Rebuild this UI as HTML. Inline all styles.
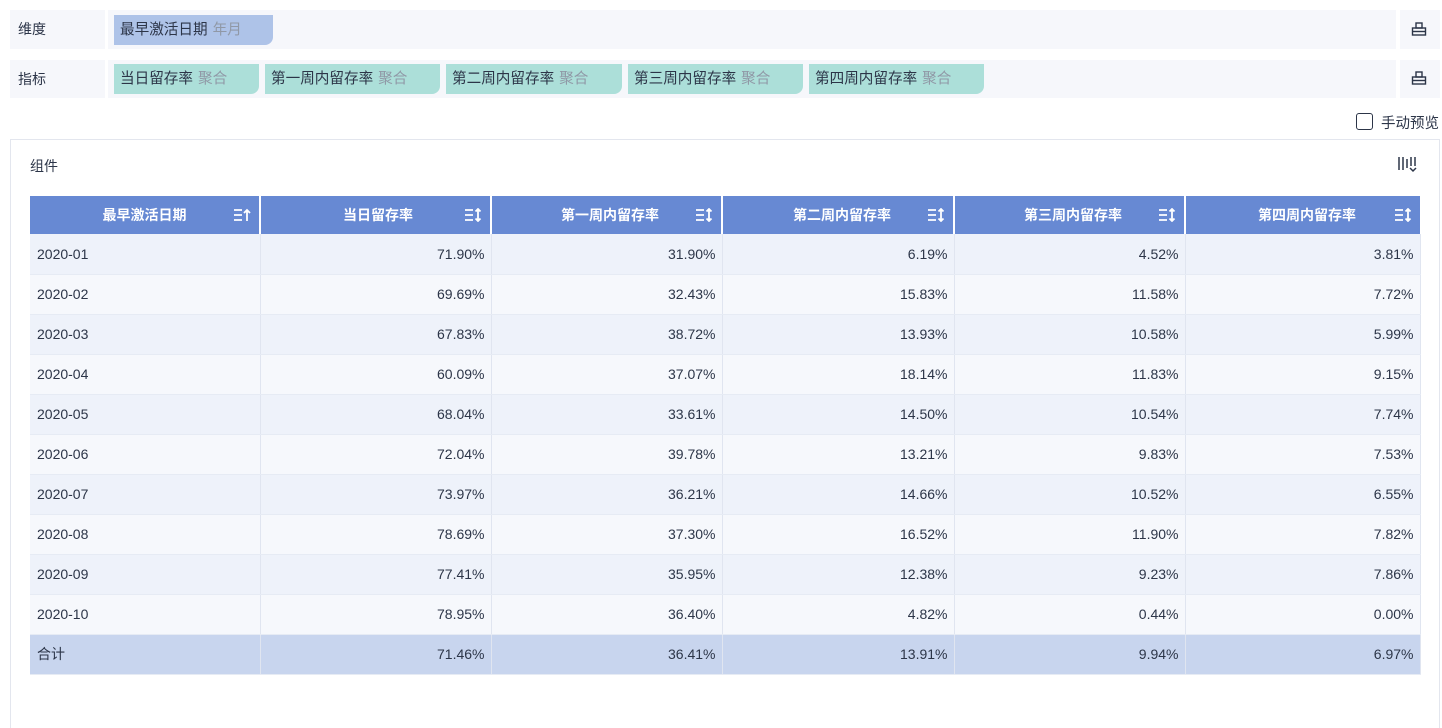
<!DOCTYPE html>
<html style="height:728px;overflow:hidden"><head><meta charset="utf-8"><style>
*{margin:0;padding:0;box-sizing:border-box}
body{width:1442px;height:728px;background:#fff;font-family:"Liberation Sans","Noto Sans CJK SC",sans-serif;font-size:14px;color:#2c3548;position:relative;overflow:hidden}
.lab{position:absolute;left:10px;width:95px;background:#f6f7fb;padding-left:8px;line-height:39px;color:#2c3548}
.bar{position:absolute;left:108px;width:1288px;background:#f6f7fb}
.ic{position:absolute;left:1400px;width:40px;background:#f6f7fb}
.tag{position:absolute;height:30px;line-height:30px;padding-left:6px;border-radius:0 0 8px 0;font-size:14.6px;color:#2c3548;white-space:nowrap}
.tag span{color:#9098a6;margin-left:5px}
.t1{background:#aec3e8}.t2{background:#acdfd9}
table{position:absolute;left:30px;top:196px;border-collapse:collapse;table-layout:fixed}
th{background:#6789d3;color:#fff;font-weight:bold;height:38px;font-size:14px;border-right:2px solid #fff;position:relative}
td{height:40px;border-right:1px solid #e0e5f0;border-bottom:1px solid #e6ebf4;text-align:right;padding-right:6px;font-size:14px}
td:first-child{text-align:left;padding-left:7px}
tr.o td{background:#eef2fa}tr.e td{background:#f6f8fc}tr.s td{background:#c8d5ee}
.si{position:absolute;right:8px;top:12px}
</style></head><body>
<div class="lab" style="top:10px;height:39px">维度</div>
<div class="bar" style="top:10px;height:39px"></div>
<div class="ic" style="top:10px;height:39px"></div>
<div class="tag t1" style="left:114px;top:15px;width:159px">最早激活日期<span>年月</span></div>
<div class="lab" style="top:60px;height:38px">指标</div>
<div class="bar" style="top:60px;height:38px"></div>
<div class="ic" style="top:60px;height:38px"></div>
<div class="tag t2" style="left:114px;top:64px;width:145px">当日留存率<span>聚合</span></div>
<div class="tag t2" style="left:265px;top:64px;width:175px">第一周内留存率<span>聚合</span></div>
<div class="tag t2" style="left:446px;top:64px;width:176px">第二周内留存率<span>聚合</span></div>
<div class="tag t2" style="left:628px;top:64px;width:175px">第三周内留存率<span>聚合</span></div>
<div class="tag t2" style="left:809px;top:64px;width:175px">第四周内留存率<span>聚合</span></div>
<svg style="position:absolute;left:1411px;top:21px" width="16" height="16" viewBox="0 0 16 16" fill="none" stroke="#2c3548" stroke-width="1.4"><rect x="1.5" y="7" width="13" height="7"/><rect x="5" y="2" width="6" height="5"/><line x1="1.5" y1="10.5" x2="14.5" y2="10.5"/></svg>
<svg style="position:absolute;left:1411px;top:70px" width="16" height="16" viewBox="0 0 16 16" fill="none" stroke="#2c3548" stroke-width="1.4"><rect x="1.5" y="7" width="13" height="7"/><rect x="5" y="2" width="6" height="5"/><line x1="1.5" y1="10.5" x2="14.5" y2="10.5"/></svg>
<div style="position:absolute;left:1356px;top:113px;width:17px;height:17px;border:1px solid #2c3548;border-radius:3px"></div>
<div style="position:absolute;left:1381px;top:112px;font-size:14.5px;color:#2c3548">手动预览</div>
<div style="position:absolute;left:10px;top:139px;width:1430px;height:600px;border:1px solid #e3e6ee"></div>
<div style="position:absolute;left:30px;top:156px;font-size:14px">组件</div>
<svg style="position:absolute;left:1397px;top:155px" width="20" height="18" viewBox="0 0 20 18" fill="none" stroke="#2c3548" stroke-width="1.5"><line x1="2" y1="2" x2="2" y2="15"/><line x1="6" y1="2" x2="6" y2="15"/><line x1="10" y1="4" x2="10" y2="13"/><line x1="14" y1="2" x2="14" y2="11"/><line x1="18" y1="2" x2="18" y2="11"/><path d="M13 13l3 3 3-3"/></svg>
<table>
<colgroup><col style="width:230px"><col style="width:231px"><col style="width:231px"><col style="width:232px"><col style="width:231px"><col style="width:235px"></colgroup>
<tr><th>最早激活日期<svg class="si" width="18" height="14" viewBox="0 0 18 14" stroke="#fff" stroke-width="1.8" fill="none"><path d="M1 2h8M1 7h8M1 12h8M14 13V2M11 5l3-3 3 3"/></svg></th>
<th style="text-align:right;padding-right:77px">当日留存率<svg class="si" width="18" height="14" viewBox="0 0 18 14" stroke="#fff" stroke-width="1.8" fill="none"><path d="M1 2h8M1 7h8M1 12h8M14 1v12M11.5 3.5L14 1l2.5 2.5M11.5 10.5L14 13l2.5-2.5"/></svg></th>
<th style="text-align:right;padding-right:62px">第一周内留存率<svg class="si" width="18" height="14" viewBox="0 0 18 14" stroke="#fff" stroke-width="1.8" fill="none"><path d="M1 2h8M1 7h8M1 12h8M14 1v12M11.5 3.5L14 1l2.5 2.5M11.5 10.5L14 13l2.5-2.5"/></svg></th>
<th style="text-align:right;padding-right:62px">第二周内留存率<svg class="si" width="18" height="14" viewBox="0 0 18 14" stroke="#fff" stroke-width="1.8" fill="none"><path d="M1 2h8M1 7h8M1 12h8M14 1v12M11.5 3.5L14 1l2.5 2.5M11.5 10.5L14 13l2.5-2.5"/></svg></th>
<th style="text-align:right;padding-right:62px">第三周内留存率<svg class="si" width="18" height="14" viewBox="0 0 18 14" stroke="#fff" stroke-width="1.8" fill="none"><path d="M1 2h8M1 7h8M1 12h8M14 1v12M11.5 3.5L14 1l2.5 2.5M11.5 10.5L14 13l2.5-2.5"/></svg></th>
<th style="text-align:right;padding-right:64px;border-right:0">第四周内留存率<svg class="si" width="18" height="14" viewBox="0 0 18 14" stroke="#fff" stroke-width="1.8" fill="none"><path d="M1 2h8M1 7h8M1 12h8M14 1v12M11.5 3.5L14 1l2.5 2.5M11.5 10.5L14 13l2.5-2.5"/></svg></th></tr>
<tr class="o"><td>2020-01</td><td>71.90%</td><td>31.90%</td><td>6.19%</td><td>4.52%</td><td>3.81%</td></tr>
<tr class="e"><td>2020-02</td><td>69.69%</td><td>32.43%</td><td>15.83%</td><td>11.58%</td><td>7.72%</td></tr>
<tr class="o"><td>2020-03</td><td>67.83%</td><td>38.72%</td><td>13.93%</td><td>10.58%</td><td>5.99%</td></tr>
<tr class="e"><td>2020-04</td><td>60.09%</td><td>37.07%</td><td>18.14%</td><td>11.83%</td><td>9.15%</td></tr>
<tr class="o"><td>2020-05</td><td>68.04%</td><td>33.61%</td><td>14.50%</td><td>10.54%</td><td>7.74%</td></tr>
<tr class="e"><td>2020-06</td><td>72.04%</td><td>39.78%</td><td>13.21%</td><td>9.83%</td><td>7.53%</td></tr>
<tr class="o"><td>2020-07</td><td>73.97%</td><td>36.21%</td><td>14.66%</td><td>10.52%</td><td>6.55%</td></tr>
<tr class="e"><td>2020-08</td><td>78.69%</td><td>37.30%</td><td>16.52%</td><td>11.90%</td><td>7.82%</td></tr>
<tr class="o"><td>2020-09</td><td>77.41%</td><td>35.95%</td><td>12.38%</td><td>9.23%</td><td>7.86%</td></tr>
<tr class="e"><td>2020-10</td><td>78.95%</td><td>36.40%</td><td>4.82%</td><td>0.44%</td><td>0.00%</td></tr>
<tr class="s"><td>合计</td><td>71.46%</td><td>36.41%</td><td>13.91%</td><td>9.94%</td><td>6.97%</td></tr>
</table>
</body></html>
